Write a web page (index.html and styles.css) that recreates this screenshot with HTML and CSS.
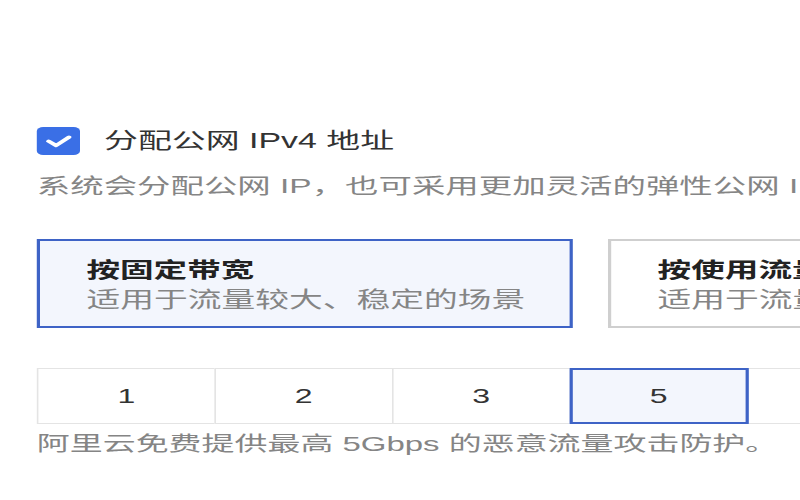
FILE: index.html
```html
<!DOCTYPE html>
<html lang="zh-CN">
<head>
<meta charset="utf-8">
<title>公网 IP 配置</title>
<link rel="stylesheet" href="styles.css">
</head>
<body>
<div class="stage">
  <div class="check-row">
    <span class="checkbox">
      <svg viewBox="0 0 28 28" width="28" height="28"><polyline points="7.5,14.2 12.3,18.6 20.5,10" fill="none" stroke="#fff" stroke-width="3.2" stroke-linecap="round" stroke-linejoin="round"/></svg>
    </span>
    <span class="check-label">分配公网 IPv4 地址</span>
  </div>
  <div class="desc">系统会分配公网 IP，也可采用更加灵活的弹性公网 IP 方案</div>

  <div class="cards">
    <div class="card active">
      <div class="card-title">按固定带宽</div>
      <div class="card-sub">适用于流量较大、稳定的场景</div>
    </div>
    <div class="card">
      <div class="card-title">按使用流量</div>
      <div class="card-sub">适用于流量小或流量波动较大的场景</div>
    </div>
  </div>

  <div class="segments">
    <div class="seg">1</div>
    <div class="seg">2</div>
    <div class="seg">3</div>
    <div class="seg selected">5</div>
    <div class="seg">10</div>
  </div>
  <div class="note">阿里云免费提供最高 5Gbps 的恶意流量攻击防护。</div>
</div>
</body>
</html>
```

FILE: styles.css
```css
html, body {
  margin: 0;
  padding: 0;
  width: 800px;
  height: 500px;
  overflow: hidden;
  background: #ffffff;
}

.stage {
  width: 500px;
  box-sizing: border-box;
  padding: 127px 0 0 23px;
  transform: scaleX(1.6);
  transform-origin: 0 0;
  font-family: "Liberation Sans", "Noto Sans CJK SC", sans-serif;
  white-space: nowrap;
}

.check-row {
  display: flex;
  align-items: center;
  height: 28px;
}

.checkbox {
  width: 27.5px;
  height: 28px;
  border-radius: 4px;
  background: #3a6fe6;
  display: flex;
  align-items: center;
  justify-content: center;
  flex-shrink: 0;
  margin-left: -0.5px;
}

.checkbox svg {
  display: block;
}

.check-label {
  margin-left: 15px;
  font-size: 21.2px;
  color: #333333;
  line-height: 28px;
}

.desc {
  margin-top: 16px;
  font-size: 20.9px;
  line-height: 30px;
  color: #858585;
}

.cards {
  display: flex;
  gap: 22px;
  margin-top: 38px;
}

.card {
  width: 335px;
  flex-shrink: 0;
  box-sizing: border-box;
  height: 89px;
  border: 2px solid #cfcfcf;
  background: #ffffff;
  padding: 14px 0 0 29px;
}

.card.active {
  border-color: #3e63c6;
  background: #f3f6fd;
}

.card-title {
  font-size: 21px;
  line-height: 30px;
  font-weight: 700;
  color: #222222;
}

.card-sub {
  font-size: 21.1px;
  line-height: 30px;
  color: #858585;
}

.segments {
  display: flex;
  margin-top: 40px;
}

.seg {
  width: 111.9px;
  height: 56px;
  box-sizing: border-box;
  flex-shrink: 0;
  border: 1px solid #e4e4e4;
  margin-left: -1px;
  display: flex;
  align-items: center;
  justify-content: center;
  font-size: 20px;
  color: #333333;
  background: #ffffff;
}

.seg:first-child {
  margin-left: 0;
}

.seg.selected {
  border: 2px solid #3e63c6;
  background: #f3f6fd;
  position: relative;
  z-index: 1;
}

.note {
  margin-top: 5px;
  font-size: 20.6px;
  line-height: 30px;
  color: #858585;
}
```
